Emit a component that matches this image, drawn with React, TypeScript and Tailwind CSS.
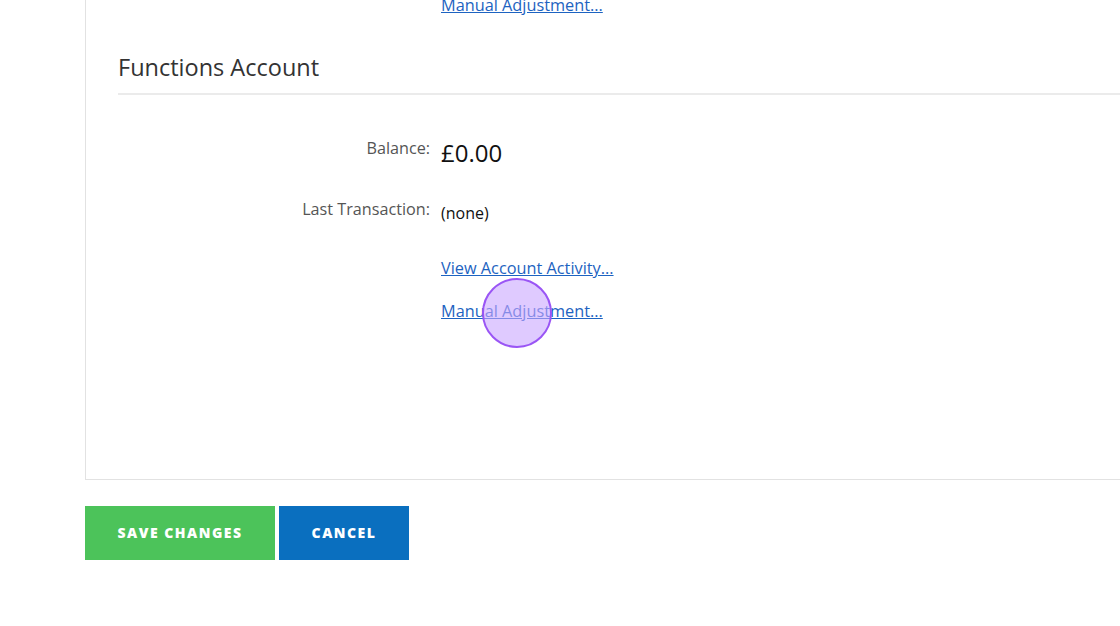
import React from "react";

const font = { fontFamily: '"Open Sans", "Liberation Sans", sans-serif' };

export default function App() {
  return (
    <div className="relative w-[1120px] h-[626px] overflow-hidden bg-white" style={font}>
      <div className="pl-[85px]">
        {/* Panel */}
        <div className="w-[1100px] h-[481px] -mt-px flex flex-col border-l border-b border-[#e2e2e2] px-8">
          <div className="pl-[323px] -mt-[6px] h-[22px]">
            <a href="#" className="text-[16.3px] leading-[22px] text-[#1d63c1] underline">Manual Adjustment...</a>
          </div>

          <h2 className="mt-[36px] text-[23.5px] leading-[32px] text-[#333]">Functions Account</h2>
          <div className="mt-[10px] border-b-2 border-[#ebebeb]" />

          <div className="mt-[41px] flex items-start">
            <div className="w-[323px] shrink-0 pr-[11px] text-right text-[16.2px] leading-[24px] text-[#555]">Balance:</div>
            <div className="text-[24px] leading-[34px] text-[#111]">£0.00</div>
          </div>
          <div className="mt-[27px] flex items-start">
            <div className="w-[323px] shrink-0 pr-[11px] text-right text-[16.2px] leading-[24px] text-[#555]">Last Transaction:</div>
            <div className="pt-[4px] text-[16px] leading-[24px] text-[#111]">(none)</div>
          </div>

          <div className="pl-[323px] mt-[32px] flex flex-col items-start gap-[21px]">
            <a href="#" className="text-[16.3px] leading-[22px] text-[#1d63c1] underline">View Account Activity...</a>
            <a href="#" className="text-[16.3px] leading-[22px] text-[#1d63c1] underline">Manual Adjustment...</a>
          </div>
        </div>

        {/* Buttons */}
        <div className="mt-[26px] flex gap-[4px]">
          <button className="w-[190px] h-[54px] pb-px bg-[#4cc35a] text-white text-[14px] font-extrabold tracking-[1.5px] uppercase">
            Save Changes
          </button>
          <button className="w-[130px] h-[54px] pb-px bg-[#0a6fbf] text-white text-[14px] font-extrabold tracking-[1.5px] uppercase">
            Cancel
          </button>
        </div>
      </div>

      {/* click highlight */}
      <div className="absolute left-[482px] top-[278px] w-[70px] h-[70px] rounded-full border-2 border-[#9a55f5] bg-[#c9a6ff]/60" />
    </div>
  );
}
